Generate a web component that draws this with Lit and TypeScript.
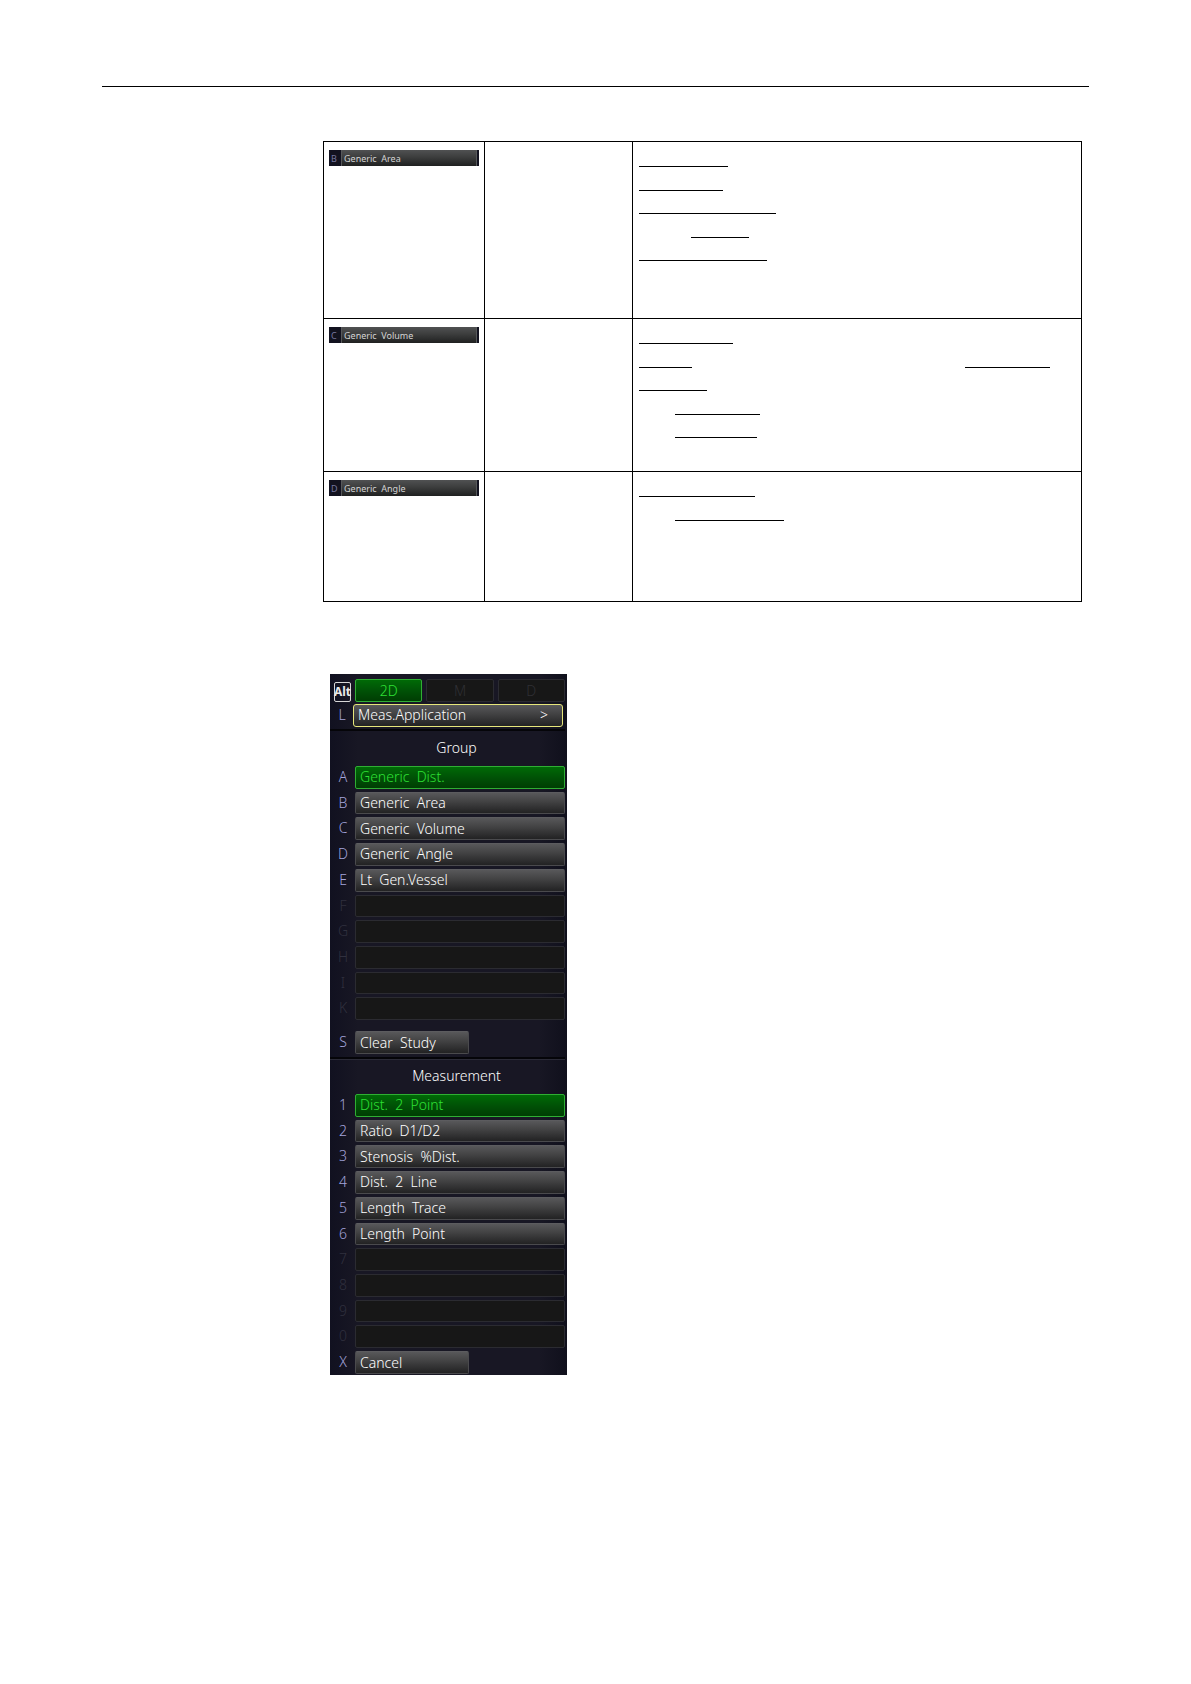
import { LitElement, html, css } from "lit";
import { customElement, property } from "lit/decorators.js";
import { styleMap } from "lit/directives/style-map.js";
import { classMap } from "lit/directives/class-map.js";

/** A ruled blank: space before it, then its length. */
type Blank = [gap: number, length: number];

interface Topic {
  key: string;
  label: string;
  lines: Blank[][];
}

interface Entry {
  key: string;
  label?: string;
  active?: boolean;
}

const topics: Topic[] = [
  {
    key: "B",
    label: "Generic  Area",
    lines: [[[0, 89]], [[0, 84]], [[0, 137]], [[52, 58]], [[0, 128]]],
  },
  {
    key: "C",
    label: "Generic  Volume",
    lines: [[[0, 94]], [[0, 53], [273, 85]], [[0, 68]], [[36, 85]], [[36, 82]]],
  },
  {
    key: "D",
    label: "Generic  Angle",
    lines: [[[0, 116]], [[36, 109]]],
  },
];

const groups: Entry[] = [
  { key: "A", label: "Generic  Dist.", active: true },
  { key: "B", label: "Generic  Area" },
  { key: "C", label: "Generic  Volume" },
  { key: "D", label: "Generic  Angle" },
  { key: "E", label: "Lt  Gen.Vessel" },
  { key: "F" },
  { key: "G" },
  { key: "H" },
  { key: "I" },
  { key: "K" },
];

const measurements: Entry[] = [
  { key: "1", label: "Dist.  2  Point", active: true },
  { key: "2", label: "Ratio  D1/D2" },
  { key: "3", label: "Stenosis  %Dist." },
  { key: "4", label: "Dist.  2  Line" },
  { key: "5", label: "Length  Trace" },
  { key: "6", label: "Length  Point" },
  { key: "7" },
  { key: "8" },
  { key: "9" },
  { key: "0" },
];

@customElement("key-chip")
export class KeyChip extends LitElement {
  @property() key = "";
  @property() label = "";

  static styles = css`
    :host {
      display: block;
    }
    .chip {
      display: grid;
      grid-template-columns: 12px 1fr;
      width: 100%;
      height: 16px;
      padding: 0 2px 0 0;
      border: 0;
      background: #12121f;
      font: 9px/17px "Noto Sans", sans-serif;
      text-align: left;
      white-space: pre;
    }
    .key {
      padding-left: 2px;
      color: #77779f;
    }
    .label {
      height: 16px;
      padding-left: 2px;
      border: solid #56585a;
      border-width: 0 1px;
      background: linear-gradient(#505152, #3c3d3d 45%, #1f2020);
      color: #d4d4d4;
    }
  `;

  render() {
    return html`<button class="chip" type="button"><span class="key">${this.key}</span><span class="label">${this.label}</span></button>`;
  }
}

@customElement("topic-table")
export class TopicTable extends LitElement {
  static styles = css`
    :host {
      display: block;
    }
    .table {
      width: 100%;
      border-collapse: collapse;
      table-layout: fixed;
    }
    .action {
      width: 161px;
    }
    .name {
      width: 148px;
    }
    .row {
      height: 153px;
    }
    .row:first-child {
      height: 177px;
    }
    .row:last-child {
      height: 130px;
    }
    .cell {
      padding: 8px 5px 0;
      border: 1px solid #000;
      vertical-align: top;
    }
    .notes {
      padding: 1px 6px 0;
    }
    .line {
      display: flex;
      height: 23px;
    }
    .line:nth-child(even),
    .line:first-child {
      height: 24px;
    }
    .blank {
      border-bottom: 1px solid #000;
    }
  `;

  private line(blanks: Blank[]) {
    return html`<div class="line">
      ${blanks.map(
        ([gap, length]) =>
          html`<span class="blank" style=${styleMap({ marginLeft: `${gap}px`, width: `${length}px` })}></span>`
      )}
    </div>`;
  }

  render() {
    return html`<table class="table">
      <colgroup>
        <col class="action" />
        <col class="name" />
        <col />
      </colgroup>
      <tbody>
        ${topics.map(
          (topic) => html`<tr class="row">
            <td class="cell"><key-chip .key=${topic.key} .label=${topic.label}></key-chip></td>
            <td class="cell"></td>
            <td class="cell notes">${topic.lines.map((l) => this.line(l))}</td>
          </tr>`
        )}
      </tbody>
    </table>`;
  }
}

@customElement("measure-menu")
export class MeasureMenu extends LitElement {
  static styles = css`
    :host {
      display: block;
      box-sizing: border-box;
      width: 237px;
      padding: 5px 2px 1px 0;
      background: linear-gradient(90deg, #111120, #181724 12%, #181724 88%, #10101c);
      font: 14px/20px "Noto Sans", sans-serif;
      font-weight: 300;
    }
    .modes {
      display: grid;
      grid-template-columns: 17px repeat(3, 1fr);
      column-gap: 4px;
      padding-left: 4px;
    }
    .row {
      display: grid;
      grid-template-columns: 25px 1fr;
    }
    .list {
      display: grid;
      grid-template-rows: repeat(10, 1fr);
      row-gap: 3px;
      height: 254px;
    }
    .btn {
      box-sizing: border-box;
      min-width: 0;
      min-height: 22px;
      padding: 0 4px;
      border: 1px solid #4a4a4d;
      border-top-color: #5c5c5f;
      border-radius: 2px;
      background: linear-gradient(#58585a, #414142 45%, #222223);
      color: #fff;
      font: inherit;
      line-height: 20px;
      text-align: left;
      white-space: pre;
    }
    .active {
      border-color: #2fae33;
      background: linear-gradient(#006a06, #005206 50%, #003d03);
      color: #2ee034;
    }
    .empty {
      border-color: #2b2b31;
      background: #171717;
      color: #2f2f34;
    }
    .mode {
      height: 23px;
      text-align: center;
    }
    .alt {
      box-sizing: border-box;
      height: 20px;
      margin-top: 3px;
      border: 1px solid #d8d8d8;
      border-radius: 2px;
      color: #e8e8e8;
      font: bold 12px/18px "Noto Sans", sans-serif;
      display: flex;
      justify-content: center;
    }
    .key {
      padding-left: 1px;
      color: #a4a4dc;
      font: inherit;
      line-height: 22px;
      text-align: center;
    }
    .unused {
      color: #30303e;
    }
    .application {
      grid-template-columns: 23px 1fr;
      margin: 2px 2px 0 0;
    }
    .application .btn {
      display: flex;
      justify-content: space-between;
      height: 23px;
      padding: 0 14px 0 4px;
      border-color: #e6e67a;
      border-radius: 3px;
    }
    .title {
      margin: 2px 0 7px;
      padding: 7px 0 1px 18px;
      border-top: 2px solid #050509;
      color: #fff;
      font: inherit;
      text-align: center;
    }
    .measure {
      margin-top: 3px;
      box-shadow: inset 0 1px #2b2b38;
    }
    .short {
      grid-template-columns: 25px 114px;
      grid-template-rows: 23px;
    }
    .clear {
      margin-top: 11px;
    }
    .cancel {
      margin-top: 3px;
    }
  `;

  private entry(e: Entry) {
    const empty = !e.label;
    return html`<div class="row"><kbd class=${classMap({ key: true, unused: empty })}>${e.key}</kbd><button
        class=${classMap({ btn: true, active: !!e.active, empty })}
        type="button"
        ?disabled=${empty}
        aria-label=${e.label ?? e.key}
      >${e.label ?? ""}</button></div>`;
  }

  render() {
    return html`
      <div class="modes">
        <kbd class="alt">Alt</kbd>
        <button class="btn mode active" type="button">2D</button>
        <button class="btn mode empty" type="button" disabled>M</button>
        <button class="btn mode empty" type="button" disabled>D</button>
      </div>
      <div class="row application">
        <kbd class="key">L</kbd>
        <button class="btn" type="button"><span>Meas.Application</span><span>&gt;</span></button>
      </div>
      <h2 class="title">Group</h2>
      <div class="list">${groups.map((e) => this.entry(e))}</div>
      <div class="row short clear">
        <kbd class="key">S</kbd>
        <button class="btn" type="button">Clear  Study</button>
      </div>
      <h2 class="title measure">Measurement</h2>
      <div class="list">${measurements.map((e) => this.entry(e))}</div>
      <div class="row short cancel">
        <kbd class="key">X</kbd>
        <button class="btn" type="button">Cancel</button>
      </div>
    `;
  }
}

@customElement("app-root")
export class AppRoot extends LitElement {
  static styles = css`
    :host {
      display: block;
      box-sizing: border-box;
      min-height: 100vh;
      padding: 86px 102px 0;
      background: #fff;
    }
    .rule {
      margin: 0;
      border: 0;
      border-top: 1px solid #000;
    }
    .content {
      padding: 54px 7px 0 221px;
    }
    .menu {
      margin: 72px 0 0 7px;
    }
  `;

  render() {
    return html`
      <hr class="rule" />
      <main class="content">
        <topic-table></topic-table>
        <measure-menu class="menu"></measure-menu>
      </main>
    `;
  }
}
